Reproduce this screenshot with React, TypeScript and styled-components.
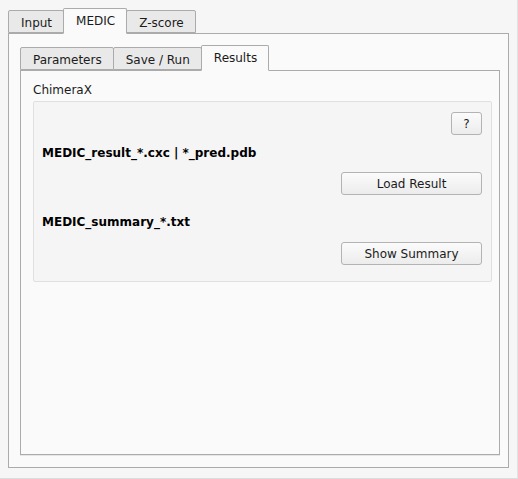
import React from "react";
import styled, { createGlobalStyle, css } from "styled-components";

const Global = createGlobalStyle`
  html, body { margin: 0; padding: 0; background: #f6f6f6; }
  body { font-family: "DejaVu Sans", "Liberation Sans", sans-serif; font-size: 12px; color: #1b1b1b; }
`;

const Window = styled.div`
  box-sizing: border-box;
  width: 518px;
  height: 479px;
  background: #f6f6f6;
  border-right: 1px solid #e2e2e2;
  border-bottom: 1px solid #dcdcdc;
  padding: 8px 8px 10px 8px;
  display: flex;
  flex-direction: column;
`;

const TabBar = styled.div`
  display: flex;
  align-items: flex-end;
  height: 25px;
  position: relative;
  z-index: 1;
`;

const Tab = styled.div<{ $active?: boolean }>`
  box-sizing: border-box;
  padding: 0 11px 0 12px;
  display: flex;
  align-items: center;
  justify-content: center;
  border: 1px solid #ababab;
  border-radius: 2px 2px 0 0;
  margin-right: -1px;
  white-space: nowrap;
  ${(p) =>
    p.$active
      ? css`
          height: 26px;
          margin-bottom: -1px;
          background: #fafafa;
          border-bottom: 1px solid #fafafa;
          padding-bottom: 1px;
          position: relative;
          z-index: 2;
        `
      : css`
          height: 23px;
          background: #e9e9e9;
          padding-top: 2px;
        `}
`;

const Pane = styled.div`
  box-sizing: border-box;
  flex: 1;
  display: flex;
  flex-direction: column;
  background: #fafafa;
  border: 1px solid #ababab;
`;

const OuterPane = styled(Pane)`
  padding: 11px 8px 12px 11px;
`;

const InnerPane = styled(Pane)`
  padding: 12px 7px 0 12px;
  box-shadow: 0 1px 0 #e6e6e6;
`;

const SectionLabel = styled.div`
  line-height: 14px;
  height: 14px;
`;

const GroupBox = styled.div`
  box-sizing: border-box;
  margin-top: 4px;
  background: #f5f5f5;
  border: 1px solid #e0e0e0;
  border-radius: 2px;
  padding: 10px 9px 16px 8px;
  display: flex;
  flex-direction: column;
`;

const ButtonRow = styled.div<{ $top: number }>`
  display: flex;
  justify-content: flex-end;
  margin-top: ${(p) => p.$top}px;
`;

const Button = styled.button<{ $width: number }>`
  box-sizing: border-box;
  width: ${(p) => p.$width}px;
  height: 23px;
  font-family: inherit;
  font-size: 12px;
  color: #1b1b1b;
  background: linear-gradient(#fbfbfb, #ececec);
  border: 1px solid #b3b3b3;
  border-radius: 3px;
  padding: 0;
`;

const FileLabel = styled.div<{ $top: number }>`
  font-weight: bold;
  color: #000;
  line-height: 14px;
  height: 14px;
  margin-top: ${(p) => p.$top}px;
`;

export default function App() {
  return (
    <>
      <Global />
      <Window>
        <TabBar>
          <Tab>Input</Tab>
          <Tab $active>MEDIC</Tab>
          <Tab>Z-score</Tab>
        </TabBar>
        <OuterPane>
          <TabBar>
            <Tab>Parameters</Tab>
            <Tab>Save / Run</Tab>
            <Tab $active>Results</Tab>
          </TabBar>
          <InnerPane>
            <SectionLabel>ChimeraX</SectionLabel>
            <GroupBox>
              <ButtonRow $top={0}>
                <Button $width={31}>?</Button>
              </ButtonRow>
              <FileLabel $top={11}>MEDIC_result_*.cxc | *_pred.pdb</FileLabel>
              <ButtonRow $top={12}>
                <Button $width={141}>Load Result</Button>
              </ButtonRow>
              <FileLabel $top={20}>MEDIC_summary_*.txt</FileLabel>
              <ButtonRow $top={13}>
                <Button $width={141}>Show Summary</Button>
              </ButtonRow>
            </GroupBox>
          </InnerPane>
        </OuterPane>
      </Window>
    </>
  );
}
